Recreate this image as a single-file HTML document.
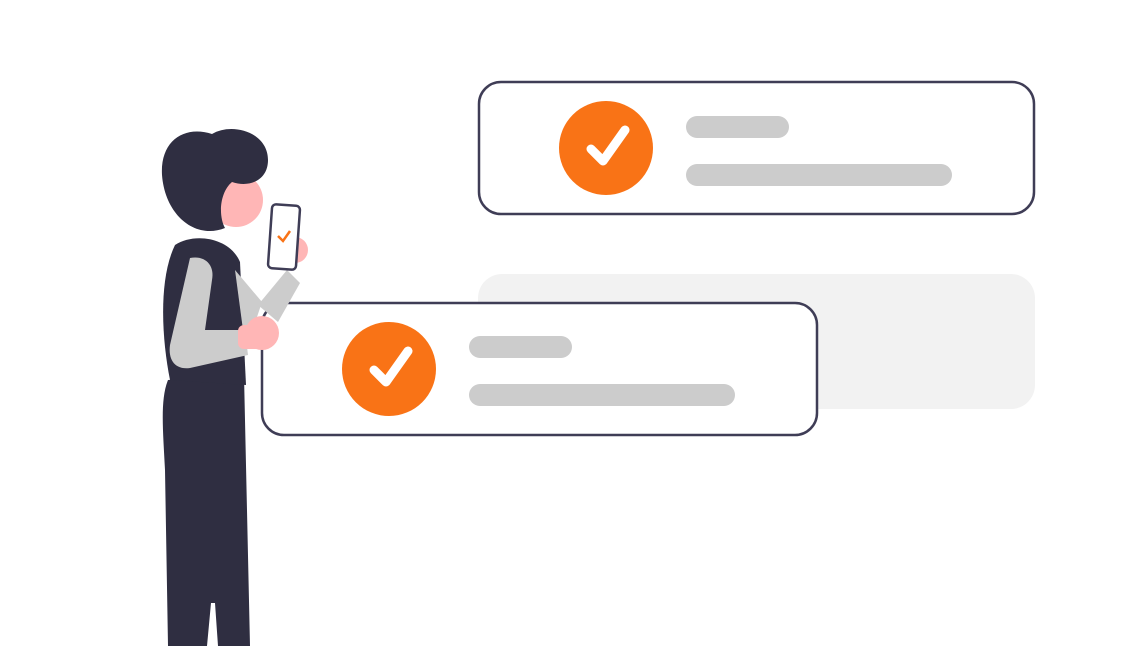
<!DOCTYPE html>
<html><head><style>html,body{margin:0;padding:0;background:#fff;}svg{display:block}</style></head>
<body>
<svg width="1148" height="646" viewBox="0 0 1148 646" xmlns="http://www.w3.org/2000/svg">
<rect x="478" y="274" width="557" height="135" rx="24" fill="#f2f2f2"/>
<rect x="479" y="82" width="555" height="132" rx="22" fill="#fff" stroke="#3f3d56" stroke-width="2.5"/>
<circle cx="606" cy="148" r="47" fill="#f97316"/>
<path d="M591 149 L603 161 L625 130" fill="none" stroke="#fff" stroke-width="9" stroke-linecap="round" stroke-linejoin="round"/>
<rect x="686" y="116" width="103" height="22" rx="11" fill="#ccc"/>
<rect x="686" y="164" width="266" height="22" rx="11" fill="#ccc"/>

<rect x="262" y="303" width="555" height="132" rx="22" fill="#fff" stroke="#3f3d56" stroke-width="2.5"/>
<circle cx="389" cy="369" r="47" fill="#f97316"/>
<path d="M374 370 L386 382 L408 351" fill="none" stroke="#fff" stroke-width="9" stroke-linecap="round" stroke-linejoin="round"/>
<rect x="469" y="336" width="103" height="22" rx="11" fill="#ccc"/>
<rect x="469" y="384" width="266" height="22" rx="11" fill="#ccc"/>

<!-- figure -->
<path d="M168 380 C160 400 163 430 165 470 L168 646 L207 646 L211 603 L215 603 L218 646 L250 646 L244 375 Z" fill="#2f2e41"/>
<path d="M175 245 C195 232 230 238 240 262 L246 385 L170 380 C162 340 158 280 175 245 Z" fill="#2f2e41"/>
<path d="M258 305 L287 270 L300 283 L278 322 Z" fill="#ccc"/>
<path d="M235 270 L262 302 L256 320 L243 330 Z" fill="#ccc"/>
<circle cx="295" cy="250" r="13" fill="#ffb6b6"/>
<rect x="270" y="205" width="28" height="64" rx="4" transform="rotate(4 284 237)" fill="#fff" stroke="#3f3d56" stroke-width="2.5"/>
<path d="M278 236 L283 241 L290 231" fill="none" stroke="#f97316" stroke-width="2.5"/>
<path d="M190 258 C205 255 215 265 212 280 L205 330 L245 330 L248 355 L190 368 C175 370 168 360 170 345 Z" fill="#ccc"/>
<circle cx="262" cy="333" r="17" fill="#ffb6b6"/>
<rect x="238" y="325" width="28" height="24" rx="6" fill="#ffb6b6"/>
<circle cx="236" cy="200" r="27" fill="#ffb6b6"/>
<path d="M162 175 C160 140 185 125 212 134 C232 122 268 132 268 160 C268 180 250 188 232 182 C220 192 218 215 225 228 C195 240 165 215 162 175 Z" fill="#2f2e41"/>
</svg>
</body></html>
